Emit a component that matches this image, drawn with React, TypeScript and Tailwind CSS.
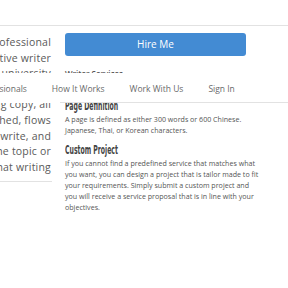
const leftLines = [
  "a professional",
  "creative writer",
  "from a university",
  "who delivers well",
  "engaging copy, all",
  "researched, flows",
  "naturally. I write, and",
  "research the topic or",
  "ensure that writing",
];

const navItems = ["Professionals", "How It Works", "Work With Us", "Sign In"];

const heading =
  "inline-block origin-left scale-x-[0.57] font-['DejaVu_Sans_Condensed',sans-serif] font-bold text-[12px] leading-[15px] text-[#444] whitespace-nowrap";

export default function App() {
  return (
    <div className="relative w-[288px] h-[288px] overflow-hidden bg-white font-['Open_Sans',sans-serif]">
      <div className="h-[26px] border-b border-[#e2e2e2]" />

      <div className="flex">
        {/* Left column */}
        <div className="w-[52px] shrink-0">
          <div className="pt-[9px] text-[10.5px] leading-[15.6px] text-[#5a5a5a] tracking-[0.2px]">
            {leftLines.map((line) => (
              <div key={line} className="flex justify-end whitespace-nowrap overflow-hidden pr-[1px]">
                {line}
              </div>
            ))}
          </div>
          <div className="mt-[6px] border-b border-[#e2e2e2]" />
        </div>

        {/* Right column */}
        <div className="ml-[13px] w-[198px] shrink-0">
          <button className="mt-[7px] w-[181px] h-[23px] rounded-[3px] bg-[#438bd3] text-white text-[10px]">
            Hire Me
          </button>
          <div className="mt-[12px] text-[8px] leading-[11px] font-semibold text-[#555]">Writer Services</div>
          <p className="text-[7.1px] leading-[11px] text-[#555] whitespace-nowrap">
            Choose the service that best suits your needs.
          </p>

          <div className="mt-[9px] flex">
            <h3 className={heading}>Page Definition</h3>
          </div>
          <p className="text-[7.1px] leading-[11px] text-[#555]">
            A page is defined as either 300 words or 600 Chinese. Japanese, Thai, or Korean characters.
          </p>

          <div className="mt-[7px] flex">
            <h3 className={heading}>Custom Project</h3>
          </div>
          <p className="text-[7.1px] leading-[11px] text-[#555]">
            If you cannot find a predefined service that matches what you want, you can design a project
            that is tailor made to fit your requirements. Simply submit a custom project and you will
            receive a service proposal that is in line with your objectives.
          </p>
        </div>
      </div>

      {/* Sticky nav overlay */}
      <nav className="absolute left-0 right-0 top-[73px] h-[30px] bg-white">
        <div className="flex h-[29px] items-center pt-[4px] gap-[25px] ml-[-26px] text-[8.5px] text-[#6a6a6a] whitespace-nowrap">
          {navItems.map((item) => (
            <span key={item}>{item}</span>
          ))}
        </div>
        <div className="ml-[60px] border-b border-[#e2e2e2]" />
      </nav>
    </div>
  );
}
